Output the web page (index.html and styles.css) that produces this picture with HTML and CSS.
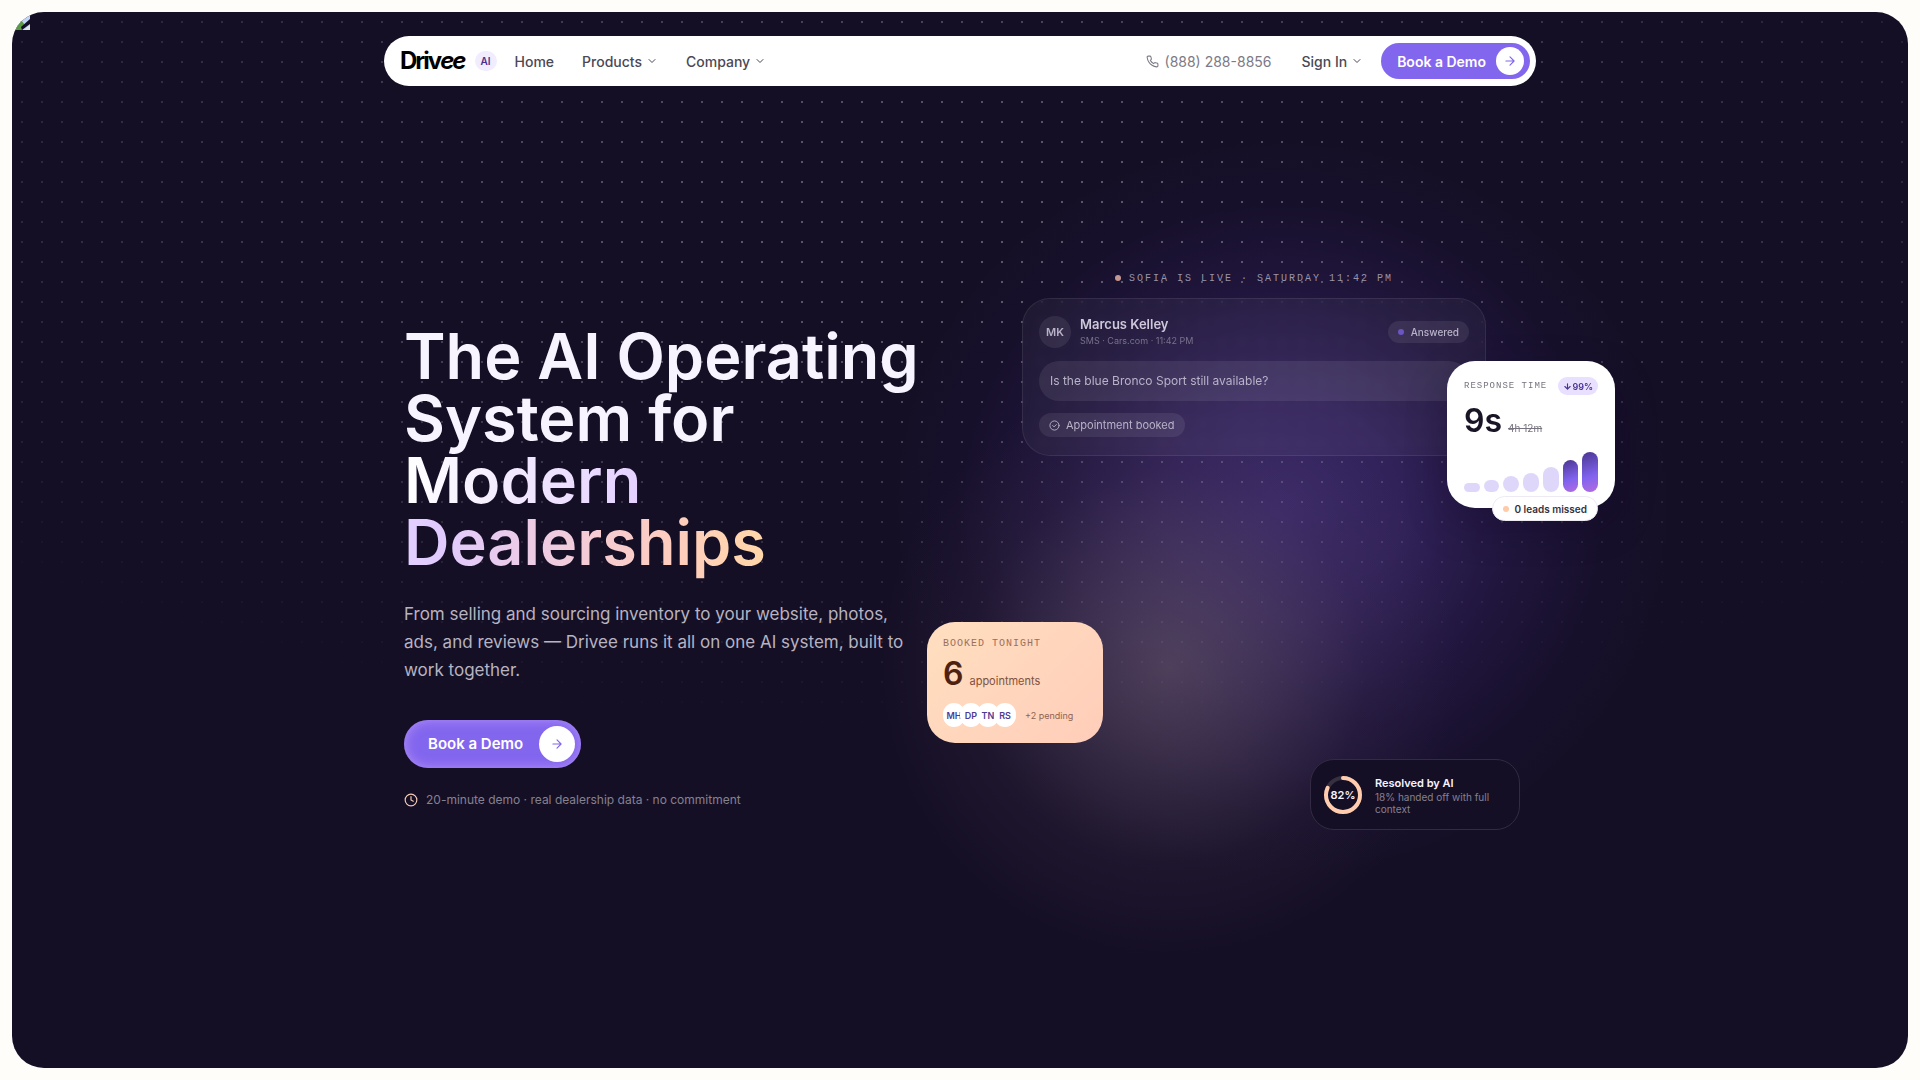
FILE: index.html
```html
<!DOCTYPE html>
<html lang="en">
<head>
<meta charset="utf-8">
<meta name="viewport" content="width=device-width, initial-scale=1">
<title>Drivee AI</title>
<link rel="stylesheet" href="styles.css">
</head>
<body>
<main class="panel">
  <div class="glow glow-violet"></div>
  <div class="glow glow-warm"></div>
  <div class="dots"></div>
  <svg class="corner-image" viewBox="0 0 18 18" aria-hidden="true">
    <path d="M0 0h18v18H0z" fill="#c3d5f7"/><path d="M0 18 9 8l4 5-3 5z" fill="#5a9a43"/><path d="m12 18 6-5v5z" fill="#dfe6e4"/><path d="m10 18-1-3 9-8v5z" fill="#150f26"/>
  </svg>

  <header class="nav">
    <a class="brand" href="#"><span class="wordmark">Driv<i>ee</i></span><span class="brand-tag">AI</span></a>
    <nav class="links" aria-label="Main">
      <a href="#">Home</a>
      <button type="button">Products <svg class="chev" viewBox="0 0 24 24"><path d="m6 9 6 6 6-6"/></svg></button>
      <button type="button">Company <svg class="chev" viewBox="0 0 24 24"><path d="m6 9 6 6 6-6"/></svg></button>
    </nav>
    <div class="nav-actions">
      <a class="phone" href="tel:8882888856"><svg viewBox="0 0 24 24"><path d="M22 16.92v3a2 2 0 0 1-2.18 2 19.79 19.79 0 0 1-8.63-3.07 19.5 19.5 0 0 1-6-6 19.79 19.79 0 0 1-3.07-8.67A2 2 0 0 1 4.11 2h3a2 2 0 0 1 2 1.72 12.84 12.84 0 0 0 .7 2.81 2 2 0 0 1-.45 2.11L8.09 9.91a16 16 0 0 0 6 6l1.27-1.27a2 2 0 0 1 2.11-.45 12.84 12.84 0 0 0 2.81.7A2 2 0 0 1 22 16.92z"/></svg>(888) 288-8856</a>
      <button class="signin" type="button">Sign In <svg class="chev" viewBox="0 0 24 24"><path d="m6 9 6 6 6-6"/></svg></button>
      <button class="cta cta-small" type="button">Book a Demo <span class="cta-icon"><svg viewBox="0 0 24 24"><path d="M5 12h14M12 5l7 7-7 7"/></svg></span></button>
    </div>
  </header>

  <section class="hero">
    <div class="copy">
      <h1>The AI Operating System for <span class="accent">Modern Dealerships</span></h1>
      <p class="lead">From selling and sourcing inventory to your website, photos, ads, and reviews — Drivee runs it all on one AI system, built to work together.</p>
      <button class="cta cta-large" type="button">Book a Demo <span class="cta-icon"><svg viewBox="0 0 24 24"><path d="M5 12h14M12 5l7 7-7 7"/></svg></span></button>
      <p class="note"><svg viewBox="0 0 24 24"><circle cx="12" cy="12" r="10"/><path d="M12 6v6l4 2"/></svg>20-minute demo · real dealership data · no commitment</p>
    </div>

    <div class="visual">
      <p class="live"><span class="dot dot-peach"></span>SOFIA IS LIVE · SATURDAY 11:42 PM</p>
      <article class="chat">
        <div class="chat-head">
          <span class="avatar">MK</span>
          <div class="who"><strong>Marcus Kelley</strong><small>SMS · Cars.com · 11:42 PM</small></div>
          <span class="status"><span class="dot dot-violet"></span>Answered</span>
        </div>
        <p class="message">Is the blue Bronco Sport still available?</p>
        <span class="booked-tag"><svg viewBox="0 0 24 24"><circle cx="12" cy="12" r="10"/><path d="m8 12 3 3 5-5"/></svg>Appointment booked</span>
      </article>

      <article class="response">
        <div class="response-head"><span class="mono">RESPONSE TIME</span><span class="drop"><svg viewBox="0 0 24 24"><path d="M12 5v14M5 12l7 7 7-7"/></svg>99%</span></div>
        <p class="figure"><strong>9s</strong><s>4h 12m</s></p>
        <div class="bars">
          <i style="height:9px"></i><i style="height:12px"></i><i style="height:16px"></i><i style="height:19px"></i><i style="height:25px"></i><i class="hot" style="height:32px"></i><i class="hot" style="height:40px"></i>
        </div>
        <span class="missed"><span class="dot dot-orange"></span>0 leads missed</span>
      </article>

      <article class="tonight">
        <span class="mono">BOOKED TONIGHT</span>
        <p class="figure"><strong>6</strong><span>appointments</span></p>
        <div class="people"><b>MH</b><b>DP</b><b>TN</b><b>RS</b><span>+2 pending</span></div>
      </article>

      <article class="resolved">
        <div class="ring"><svg viewBox="0 0 40 40"><circle class="track" cx="20" cy="20" r="17"/><circle class="value" cx="20" cy="20" r="17" pathLength="100"/></svg><b>82%</b></div>
        <div class="resolved-text"><strong>Resolved by AI</strong><small>18% handed off with full context</small></div>
      </article>
    </div>
  </section>
</main>
</body>
</html>
```
FILE: styles.css
```css
* { box-sizing: border-box; }
body { margin: 0; background: #fffdfa; font-family: Inter, "Liberation Sans", sans-serif; color: #f7f4ff; }
h1, p { margin: 0; }
button { border: 0; padding: 0; background: none; font: inherit; color: inherit; }
a { color: inherit; text-decoration: none; }
svg { fill: none; stroke: currentColor; stroke-width: 2; stroke-linecap: round; stroke-linejoin: round; flex: none; }

.panel { position: relative; display: flex; flex-direction: column; min-height: calc(100vh - 24px); margin: 12px; padding-top: 24px; border-radius: 32px; background: #150f26; overflow: hidden; }
.dots, .glow { position: absolute; inset: 0; pointer-events: none; }
.dots { background: radial-gradient(circle, rgba(255,255,255,.3) 1px, transparent 1px) 0 0 / 20px 20px; mask-image: radial-gradient(ellipse 80% 55% at 50% 20%, #000 15%, transparent 88%); }
.glow-violet { background: radial-gradient(ellipse 390px 370px at 67% 47%, rgba(88,62,160,.56), rgba(82,56,150,.46) 30%, rgba(66,42,130,.26) 58%, rgba(50,30,110,.08) 82%, transparent); }
.glow-warm { background: radial-gradient(ellipse 290px 290px at 61% 62%, rgba(108,92,108,.58), rgba(94,78,100,.42) 35%, rgba(76,58,84,.16) 68%, transparent); }
.corner-image { position: absolute; top: 0; left: 0; width: 18px; height: 18px; stroke: none; }

.nav { position: relative; display: flex; align-items: center; width: calc(100% - 32px); max-width: 1152px; height: 50px; margin: 0 auto; padding: 0 6px 0 16px; border-radius: 25px; background: #fff; color: #4b4855; font-size: 14px; font-weight: 500; }
.brand { display: flex; align-items: center; gap: 10px; color: #000; }
.wordmark { font-size: 24px; line-height: 32px; font-weight: 700; letter-spacing: -2px; }
.brand-tag { display: grid; place-items: center; width: 22px; height: 20px; border-radius: 10px; background: #f2ecff; color: #49308f; font-size: 10px; font-weight: 600; }
.links { display: flex; align-items: center; gap: 28px; margin-left: 18px; }
.links button, .signin { display: flex; align-items: center; gap: 4px; }
.chev { width: 12px; height: 12px; }
.nav-actions { display: flex; align-items: center; margin-left: auto; }
.phone { display: flex; align-items: center; gap: 6px; margin-right: 30px; color: #7c7a84; font-weight: 400; }
.phone svg { width: 13px; height: 13px; }
.signin { margin-right: 18px; }

.cta { display: inline-flex; align-items: center; justify-content: space-between; color: #fff; font-weight: 600; background: #8366ee; }
.cta-icon { display: grid; place-items: center; border-radius: 50%; background: #fff; color: #8366ee; }
.cta-small { height: 36px; gap: 10px; padding: 0 6px 0 16px; border-radius: 18px; font-size: 14px; }
.cta-small .cta-icon { width: 28px; height: 28px; }
.cta-icon svg { width: 14px; height: 14px; }
.cta-large { height: 48px; gap: 16px; margin-top: 36px; padding: 0 6px 0 24px; border-radius: 24px; font-size: 15px; box-shadow: inset 0 0 12px rgba(210,170,255,.6); }
.cta-large .cta-icon { width: 36px; height: 36px; }

.hero { position: relative; flex: 1; display: grid; grid-template-columns: 1fr 1fr; gap: 64px; align-items: center; width: 100%; max-width: 1152px; margin: 0 auto; padding: 0 20px 22px; }
h1 { font-size: 63px; line-height: 62px; font-weight: 600; }
.accent { background: linear-gradient(90deg, #fff, #e0caff 45%, #ffcdbd 85%, #ffd7a8); -webkit-background-clip: text; background-clip: text; color: transparent; }
.lead { max-width: 512px; margin-top: 27px; font-size: 17px; line-height: 28px; color: #b7b3c1; }
.note { display: flex; align-items: center; gap: 8px; margin-top: 24px; font-size: 12px; line-height: 16px; color: #85818f; }
.note svg { width: 14px; height: 14px; color: #f5cdb5; }

.visual { position: relative; height: 600px; padding: 0 30px; }
.mono { font-family: "Liberation Mono", monospace; font-size: 10px; line-height: 12px; letter-spacing: 1px; }
.live { display: flex; align-items: center; justify-content: center; gap: 8px; height: 24px; font-family: "Liberation Mono", monospace; font-size: 10px; letter-spacing: 2px; color: #9a94a8; }
.dot { width: 6px; height: 6px; border-radius: 50%; }
.dot-peach { background: #c59790; }
.dot-violet { background: #6b55c2; }
.dot-orange { background: #ffcaa8; }

.chat { display: flex; flex-direction: column; align-items: flex-start; gap: 12px; margin-top: 8px; padding: 16px 16px 18px; border: 1px solid rgba(255,255,255,.08); border-radius: 28px; background: rgba(255,255,255,.04); backdrop-filter: blur(4px); color: #b9b3c9; }
.chat-head { display: flex; align-items: center; gap: 9px; align-self: stretch; }
.avatar { display: grid; place-items: center; width: 32px; height: 32px; border-radius: 50%; background: rgba(255,255,255,.08); font-size: 11px; font-weight: 600; }
.who { display: flex; flex-direction: column; flex: 1; }
.who strong { font-size: 13px; line-height: 18px; font-weight: 600; color: #cdc8da; }
.who small { font-size: 9px; line-height: 16px; color: #79728c; }
.status { display: flex; align-items: center; gap: 7px; height: 22px; padding: 0 10px; border-radius: 11px; background: rgba(255,255,255,.08); font-size: 10px; font-weight: 500; }
.message { align-self: stretch; padding: 0 11px; border-radius: 20px; background: rgba(255,255,255,.08); font-size: 12px; line-height: 40px; }
.booked-tag { display: flex; align-items: center; gap: 6px; height: 24px; padding: 0 10px; border-radius: 12px; background: rgba(255,255,255,.08); font-size: 11px; }
.booked-tag svg { width: 11px; height: 11px; }

.response, .tonight, .resolved { position: absolute; }
.figure { display: flex; align-items: baseline; gap: 6px; }
.figure strong { font-size: 32px; line-height: 40px; font-weight: 600; }
.figure span { font-size: 11px; }
.figure s { font-size: 10px; }
.response { top: 95px; right: -99px; width: 168px; height: 147px; padding: 16px 17px; border-radius: 28px; background: #fff; color: #191526; box-shadow: 0 16px 40px rgba(15,8,35,.3); }
.response-head { display: flex; align-items: center; justify-content: space-between; }
.response .mono { font-size: 9px; color: #77737f; }
.drop { display: flex; align-items: center; height: 18px; padding: 0 5px; border-radius: 9px; background: #e9e0ff; color: #4a3393; font-size: 9px; font-weight: 600; }
.drop svg { width: 9px; height: 9px; stroke-width: 3; }
.response .figure { margin-top: 6px; }
.response s { color: #77737f; }
.bars { display: flex; align-items: flex-end; gap: 4px; height: 40px; margin-top: 11px; }
.bars i { flex: 1; border-radius: 8px; background: #dfd7fa; }
.bars .hot { background: linear-gradient(160deg, #4a3590, #8063ee 60%, #b36be0); }
.missed { position: absolute; right: 17px; bottom: -13px; display: flex; align-items: center; gap: 6px; height: 25px; padding: 0 10px; border: 1px solid #eeeaf3; border-radius: 13px; background: #fff; color: #35313f; font-size: 10px; font-weight: 600; white-space: nowrap; }
.tonight { top: 356px; left: -65px; width: 176px; height: 121px; padding: 16px; border-radius: 28px; background: linear-gradient(135deg, #ffdfbf, #ffcdba); color: #4f210f; }
.tonight .mono { display: block; color: #9a705c; }
.tonight .figure { margin-top: 4px; }
.tonight .figure span { color: #80513f; }
.people { display: flex; align-items: center; margin-top: 9px; }
.people b { display: grid; place-items: center; width: 22px; height: 24px; margin-right: -5px; border-radius: 11px; background: #fff; color: #4c3b94; font-size: 9px; font-weight: 600; }
.people span { margin-left: 14px; font-size: 9px; color: #8f6352; }
.resolved { top: 493px; right: -4px; display: flex; align-items: center; gap: 12px; width: 210px; height: 71px; padding: 0 12px; border: 1px solid #322b43; border-radius: 24px; background: #150f26; }
.ring { position: relative; display: grid; place-items: center; width: 40px; height: 40px; flex: none; }
.ring svg { position: absolute; inset: 0; transform: rotate(-90deg); stroke-width: 4; }
.track { stroke: #37303f; }
.value { stroke: #ffcdae; stroke-dasharray: 82 100; }
.ring b { font-size: 11px; font-weight: 600; }
.resolved-text { display: flex; flex-direction: column; }
.resolved strong { font-size: 11px; line-height: 16px; font-weight: 600; }
.resolved small { font-size: 10px; line-height: 12px; color: #858090; }
```
